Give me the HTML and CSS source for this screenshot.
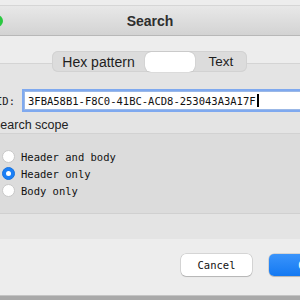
FILE: index.html
```html
<!DOCTYPE html>
<html lang="en">
<head>
    <meta charset="UTF-8">
    <meta name="viewport" content="width=device-width, initial-scale=1.0">
    <title>Search</title>
    <link rel="stylesheet" href="styles.css">
</head>
<body>
    <div class="window">
        <div class="topstrip"></div>
        <div class="titlebar">
            <span class="light"></span>
            <span class="title">Search</span>
        </div>
        <div class="content">
            <div class="seg-row">
                <div class="seg">
                    <div class="seg-item hex">Hex pattern</div>
                    <div class="seg-item selected"></div>
                    <div class="seg-item text">Text</div>
                </div>
            </div>
            <div class="tabbox">
                <div class="id-row">
                    <span class="id-label">ID:</span>
                    <div class="field">3FBA58B1-F8C0-41BC-ACD8-253043A3A17F<span class="caret"></span></div>
                </div>
                <div class="scope-label">Search scope</div>
                <div class="group">
                    <div class="radio-row"><span class="radio"></span>Header and body</div>
                    <div class="radio-row"><span class="radio on"></span>Header only</div>
                    <div class="radio-row"><span class="radio"></span>Body only</div>
                </div>
            </div>
            <div class="buttons">
                <button class="btn">Cancel</button>
                <button class="btn primary">OK</button>
            </div>
        </div>
        <div class="bottomstrip"></div>
    </div>
</body>
</html>
```

FILE: styles.css
```css
body{
    margin: 0;
    background-color: #ececec;
}
.window{
    width: 300px;
    height: 300px;
    overflow: hidden;
    display: flex;
    flex-direction: column;
    font-family: "Liberation Sans", Arial, sans-serif;
    color: #222;
}
.topstrip{
    height: 5px;
    background: #ededed;
    border-bottom: 1px solid #d6d6d6;
}
.titlebar{
    height: 29px;
    border-bottom: 1px solid #b8b8b8;
    background: linear-gradient(#e8e8e8, #d3d3d3);
    display: flex;
    align-items: center;
    justify-content: center;
    position: relative;
}
.light{
    position: absolute;
    left: -9px;
    top: 9px;
    width: 12px;
    height: 12px;
    border-radius: 50%;
    background: #2ac840;
}
.title{
    font-weight: bold;
    font-size: 14px;
    color: #2e2e2e;
}
.content{
    flex: 1;
    background: #ededed;
}
.seg-row{
    padding-top: 15px;
    padding-left: 52px;
    position: relative;
    z-index: 1;
    margin-bottom: -9px;
}
.seg{
    display: flex;
    width: 195px;
    height: 21px;
    background: #dcdcdc;
    border-radius: 6px;
    box-shadow: inset 0 0 0 1px #d2d2d2;
}
.seg-item{
    display: flex;
    align-items: center;
    justify-content: center;
    font-size: 14px;
    color: #1e1e1e;
}
.hex{
    width: 93px;
}
.selected{
    width: 50px;
    height: 20px;
    margin-top: 1px;
    background: #fff;
    border-radius: 6px;
    box-shadow: 0 0 1px rgba(0,0,0,0.35);
}
.text{
    width: 52px;
    font-size: 13.5px;
}
.tabbox{
    height: 176px;
    box-sizing: border-box;
    background: #e4e4e4;
    border-top: 1px solid #d4d4d4;
    padding-top: 25px;
}
.id-row{
    display: flex;
    align-items: center;
    height: 23px;
}
.id-label{
    font-family: "DejaVu Sans Mono", monospace;
    font-size: 10.5px;
    width: 28px;
    margin-left: -4px;
}
.field{
    flex: 1;
    height: 17px;
    margin-right: -20px;
    background: #fff;
    border: 1px solid #9bb8e6;
    box-shadow: 0 0 0 2px #7fa9ef;
    font-family: "DejaVu Sans Mono", monospace;
    font-size: 10.5px;
    color: #111;
    display: flex;
    align-items: center;
    padding-left: 3px;
}
.caret{
    display: inline-block;
    width: 2px;
    height: 13px;
    background: #000;
    margin-left: 1px;
}
.scope-label{
    margin-top: 5px;
    margin-left: -8px;
    height: 16px;
    line-height: 16px;
    font-size: 12.5px;
    color: #222;
}
.group{
    height: 81px;
    box-sizing: border-box;
    background: #dcdcdc;
    border-top: 1px solid #d2d2d2;
    border-bottom: 1px solid #d0d0d0;
    padding-top: 14px;
}
.radio-row{
    display: flex;
    align-items: center;
    height: 17px;
    font-family: "DejaVu Sans Mono", monospace;
    font-size: 10.5px;
    color: #111;
}
.radio{
    width: 13px;
    height: 13px;
    box-sizing: border-box;
    border-radius: 50%;
    background: #fff;
    border: 1px solid #c8c8c8;
    margin-left: 2px;
    margin-right: 6px;
    display: flex;
    align-items: center;
    justify-content: center;
}
.radio.on{
    background: #1b7ff5;
    border-color: #1773e0;
}
.radio.on::after{
    content: "";
    width: 5px;
    height: 5px;
    border-radius: 50%;
    background: #fff;
}
.buttons{
    display: flex;
    gap: 17px;
    padding-left: 181px;
    margin-top: 15px;
}
.btn{
    flex-shrink: 0;
    width: 71px;
    height: 22px;
    border: none;
    border-radius: 5px;
    background: #fff;
    box-shadow: 0 0 0 0.5px rgba(0,0,0,0.2), 0 1px 1px rgba(0,0,0,0.15);
    font-family: "DejaVu Sans Mono", monospace;
    font-size: 10.5px;
    color: #111;
}
.primary{
    background: linear-gradient(#3a94fb, #1479f2);
    color: #fff;
}
.bottomstrip{
    height: 4px;
    border-top: 1px solid #c4c4c4;
    background: #a9a9a9;
}
```
